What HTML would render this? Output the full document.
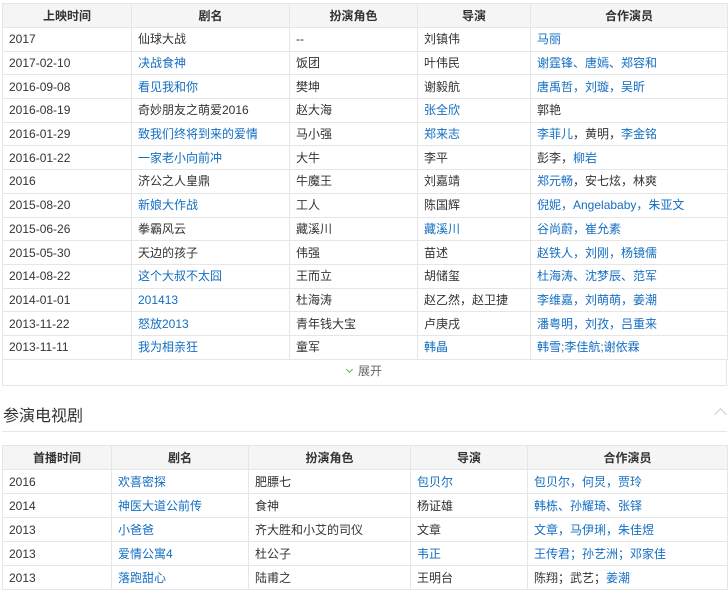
<!DOCTYPE html>
<html><head><meta charset="utf-8"><style>
*{margin:0;padding:0;box-sizing:border-box}
body{width:728px;height:591px;overflow:hidden;background:#fff;font-family:"Liberation Sans","Noto Sans CJK SC",sans-serif;font-size:12px;color:#333;position:relative}
table{border-collapse:collapse;position:absolute;left:2px;table-layout:fixed}
td,th{border:1px solid #e6e6e6;padding:0 0 0 6px;text-align:left;font-weight:normal;white-space:nowrap;overflow:hidden;vertical-align:middle;line-height:14px}
th{background:#f5f5f5;text-align:center;font-weight:bold;padding:0;color:#333}
a{color:#136ec2;text-decoration:none}
#t1{top:3px;width:725px}
#t1 th{height:24px}
#t1 td{height:23.7px}
#t2{top:445px;width:725px}
#t2 th{height:24px}
#t2 td{height:24px}
.exp{position:absolute;left:2px;top:360px;width:725px;height:26px;border:1px solid #e6e6e6;border-top:none;text-align:center;line-height:23px;color:#666}
.chev{display:inline-block;width:5px;height:5px;border-right:1.5px solid #5cb531;border-bottom:1.5px solid #5cb531;transform:rotate(45deg);margin-right:6px;position:relative;top:-3px}
.title{position:absolute;left:3px;top:402px;font-size:16px;color:#333}
.line{position:absolute;left:2px;top:431px;width:725px;border-top:1px solid #e6e6e6}
.caret{position:absolute;left:716px;top:410px;width:9px;height:9px;border-left:1px solid #ccc;border-top:1px solid #ccc;transform:rotate(45deg)}
</style></head><body>
<table id="t1">
<colgroup><col style="width:129px"><col style="width:158px"><col style="width:128px"><col style="width:113px"><col style="width:197px"></colgroup>
<tr><th>上映时间</th><th>剧名</th><th>扮演角色</th><th>导演</th><th>合作演员</th></tr>
<tr><td>2017</td><td>仙球大战</td><td>--</td><td>刘镇伟</td><td><a>马丽</a></td></tr>
<tr><td>2017-02-10</td><td><a>决战食神</a></td><td>饭团</td><td>叶伟民</td><td><a>谢霆锋、唐嫣、郑容和</a></td></tr>
<tr><td>2016-09-08</td><td><a>看见我和你</a></td><td>樊坤</td><td>谢毅航</td><td><a>唐禹哲，刘璇，吴昕</a></td></tr>
<tr><td>2016-08-19</td><td>奇妙朋友之萌爱2016</td><td>赵大海</td><td><a>张全欣</a></td><td>郭艳</td></tr>
<tr><td>2016-01-29</td><td><a>致我们终将到来的爱情</a></td><td>马小强</td><td><a>郑来志</a></td><td><a>李菲儿</a>，黄明，<a>李金铭</a></td></tr>
<tr><td>2016-01-22</td><td><a>一家老小向前冲</a></td><td>大牛</td><td>李平</td><td>彭李，<a>柳岩</a></td></tr>
<tr><td>2016</td><td>济公之人皇鼎</td><td>牛魔王</td><td>刘嘉靖</td><td><a>郑元畅</a>，安七炫，林爽</td></tr>
<tr><td>2015-08-20</td><td><a>新娘大作战</a></td><td>工人</td><td>陈国辉</td><td><a>倪妮，Angelababy，朱亚文</a></td></tr>
<tr><td>2015-06-26</td><td>拳霸风云</td><td>藏溪川</td><td><a>藏溪川</a></td><td><a>谷尚蔚，崔允素</a></td></tr>
<tr><td>2015-05-30</td><td>天边的孩子</td><td>伟强</td><td>苗述</td><td><a>赵铁人，刘刚，杨镜儒</a></td></tr>
<tr><td>2014-08-22</td><td><a>这个大叔不太囧</a></td><td>王而立</td><td>胡储玺</td><td><a>杜海涛、沈梦辰、范军</a></td></tr>
<tr><td>2014-01-01</td><td><a>201413</a></td><td>杜海涛</td><td>赵乙然，赵卫捷</td><td><a>李维嘉，刘萌萌，姜潮</a></td></tr>
<tr><td>2013-11-22</td><td><a>怒放2013</a></td><td>青年钱大宝</td><td>卢庚戌</td><td><a>潘粤明，刘孜，吕重来</a></td></tr>
<tr><td>2013-11-11</td><td><a>我为相亲狂</a></td><td>童军</td><td><a>韩晶</a></td><td><a>韩雪;李佳航;谢依霖</a></td></tr>
</table>
<div class="exp"><span class="chev"></span>展开</div>
<div class="title">参演电视剧</div>
<div class="caret"></div>
<div class="line"></div>
<table id="t2">
<colgroup><col style="width:109px"><col style="width:137px"><col style="width:162px"><col style="width:117px"><col style="width:200px"></colgroup>
<tr><th>首播时间</th><th>剧名</th><th>扮演角色</th><th>导演</th><th>合作演员</th></tr>
<tr><td>2016</td><td><a>欢喜密探</a></td><td>肥膘七</td><td><a>包贝尔</a></td><td><a>包贝尔，何炅，贾玲</a></td></tr>
<tr><td>2014</td><td><a>神医大道公前传</a></td><td>食神</td><td>杨证雄</td><td><a>韩栋、孙耀琦、张铎</a></td></tr>
<tr><td>2013</td><td><a>小爸爸</a></td><td>齐大胜和小艾的司仪</td><td>文章</td><td><a>文章，马伊琍，朱佳煜</a></td></tr>
<tr><td>2013</td><td><a>爱情公寓4</a></td><td>杜公子</td><td><a>韦正</a></td><td><a>王传君；孙艺洲；邓家佳</a></td></tr>
<tr><td>2013</td><td><a>落跑甜心</a></td><td>陆甫之</td><td>王明台</td><td>陈翔；武艺；<a>姜潮</a></td></tr>
</table>
</body></html>
